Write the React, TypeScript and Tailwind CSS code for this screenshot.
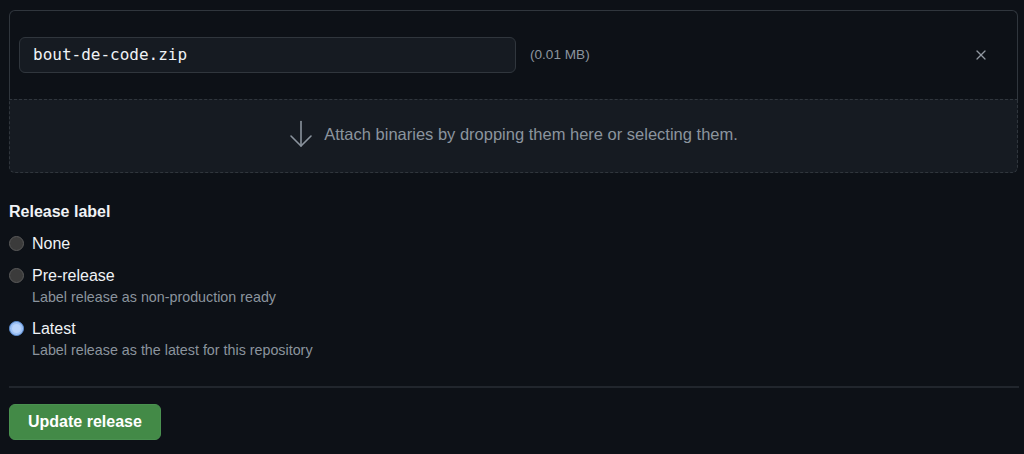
import { X } from "lucide-react";

const sans = "font-['Liberation_Sans',Arial,sans-serif]";

function Radio({ checked }: { checked?: boolean }) {
  if (checked) {
    return (
      <span className="mt-[1px] flex h-[15px] w-[15px] shrink-0 items-center justify-center rounded-full border border-[#5b8fd6] bg-[#9ec2f5]">
        <span className="h-[9px] w-[9px] rounded-full bg-[#b9d4fb]" />
      </span>
    );
  }
  return (
    <span className="mt-[1px] h-[15px] w-[15px] shrink-0 rounded-full border border-[#5a5a5a] bg-[#3b3b3b]" />
  );
}

function Option({
  label,
  desc,
  checked,
}: {
  label: string;
  desc?: string;
  checked?: boolean;
}) {
  return (
    <div className="flex gap-[8px]">
      <Radio checked={checked} />
      <div className="flex flex-col">
        <span className="text-[16px] leading-[18px] text-[#f0f3f6]">{label}</span>
        {desc && (
          <span className="mt-[4px] text-[14.3px] leading-[17px] text-[#8b949e]">{desc}</span>
        )}
      </div>
    </div>
  );
}

export default function App() {
  return (
    <div className={`min-h-[454px] w-full bg-[#0d1117] px-[9px] pt-[10px] ${sans}`}>
      <div className="w-[1009px]">
        <div className="flex h-[89px] items-center rounded-t-[6px] border border-b-0 border-[#30363d] bg-[#0d1117] pl-[9px] pr-[28px]">
          <div className="flex h-[36px] w-[497px] items-center rounded-[6px] border border-[#30363d] bg-[#161b22] px-[13px] font-['DejaVu_Sans_Mono',monospace] text-[16px] text-[#f0f3f6]">
            bout-de-code.zip
          </div>
          <span className="ml-[14px] text-[13.6px] text-[#8b949e]">(0.01 MB)</span>
          <X className="ml-auto h-[16px] w-[16px] text-[#9198a1]" strokeWidth={1.8} />
        </div>
        <div className="flex h-[74px] items-center justify-center gap-[11px] rounded-b-[6px] border border-dashed border-[#30363d] bg-[#161b22] pb-[4px]">
          <svg width="24" height="28" viewBox="0 0 24 28" fill="none" stroke="#8b949e" strokeWidth="1.6" strokeLinecap="round" strokeLinejoin="round">
            <path d="M12 1.5v24.5" />
            <path d="M2 16l10 10 10-10" />
          </svg>
          <span className="text-[16.5px] text-[#8b949e]">
            Attach binaries by dropping them here or selecting them.
          </span>
        </div>
      </div>

      <div className="mt-[30px] text-[16px] font-bold leading-[18px] text-[#f0f3f6]">
        Release label
      </div>
      <div className="mt-[14px] flex flex-col gap-[14px]">
        <Option label="None" />
        <Option label="Pre-release" desc="Label release as non-production ready" />
        <Option label="Latest" desc="Label release as the latest for this repository" checked />
      </div>

      <div className="mt-[27px] h-[2px] w-[1010px] bg-[#21262d]" />

      <button className="mt-[16px] h-[36px] rounded-[6px] border border-[#4a9150] bg-[#438a47] px-[18px] text-[16px] font-bold text-white">
        Update release
      </button>
    </div>
  );
}
